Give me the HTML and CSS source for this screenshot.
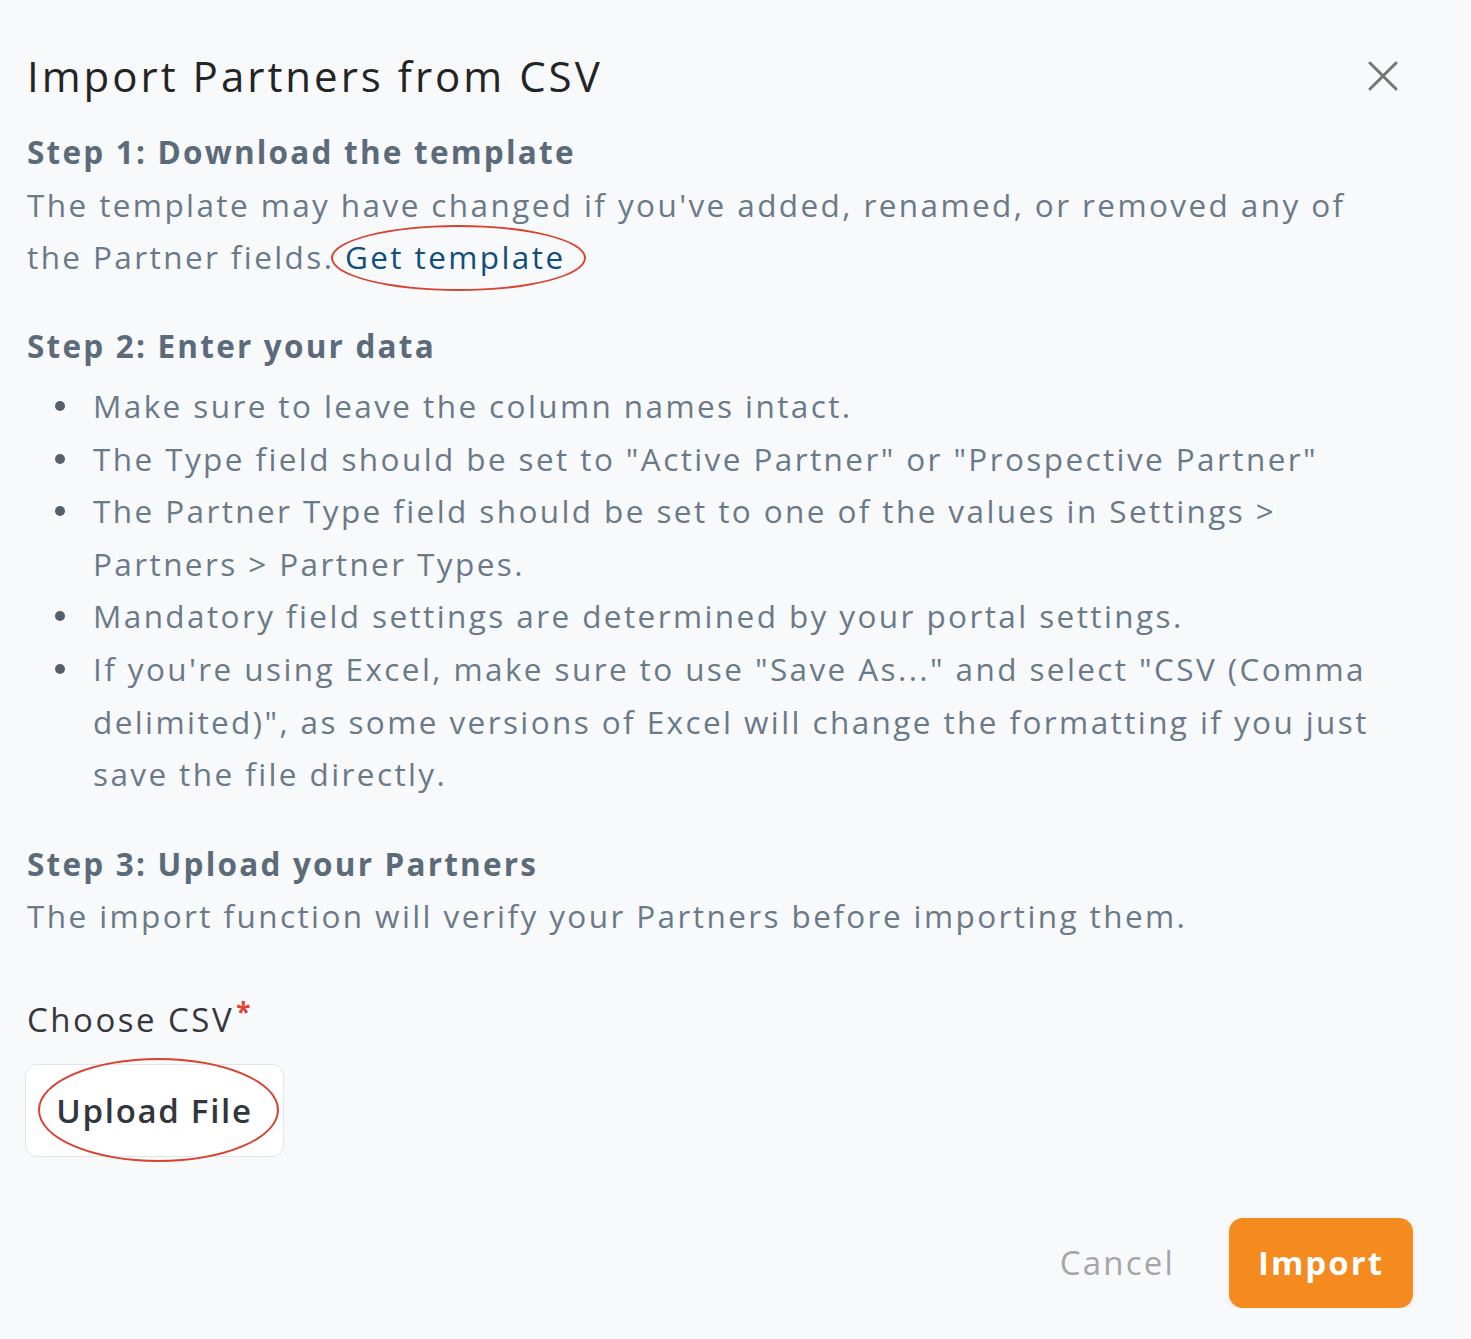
FILE: index.html
```html
<!DOCTYPE html>
<html lang="en">
<head>
<meta charset="utf-8">
<title>Import Partners from CSV</title>
<link rel="stylesheet" href="styles.css">
</head>
<body>
<div class="modal">
  <header class="modal-header">
    <h1 class="modal-title">Import Partners from CSV</h1>
    <button class="close-btn" aria-label="Close">
      <svg width="30" height="30" viewBox="0 0 30 30"><path d="M2 2 L28 28 M28 2 L2 28" stroke="#757575" stroke-width="3" stroke-linecap="round" fill="none"/></svg>
    </button>
  </header>

  <section class="step">
    <h2 class="step-title">Step 1: Download the template</h2>
    <p class="step-text">The template may have changed if you've added, renamed, or removed any of the Partner fields. <a class="link" href="#">Get template<span class="annot annot-link"></span></a></p>
  </section>

  <section class="step step-2">
    <h2 class="step-title">Step 2: Enter your data</h2>
    <ul class="bullets">
      <li>Make sure to leave the column names intact.</li>
      <li>The Type field should be set to "Active Partner" or "Prospective Partner"</li>
      <li>The Partner Type field should be set to one of the values in Settings &gt; Partners &gt; Partner Types.</li>
      <li>Mandatory field settings are determined by your portal settings.</li>
      <li>If you're using Excel, make sure to use "Save As..." and select "CSV (Comma delimited)", as some versions of Excel will change the formatting if you just save the file directly.</li>
    </ul>
  </section>

  <section class="step step-3">
    <h2 class="step-title">Step 3: Upload your Partners</h2>
    <p class="step-text">The import function will verify your Partners before importing them.</p>
  </section>

  <div class="field">
    <label class="field-label">Choose CSV<span class="req">*</span></label>
    <button class="upload-btn">Upload File<span class="annot annot-upload"></span></button>
  </div>

  <footer class="modal-footer">
    <button class="cancel-btn">Cancel</button>
    <button class="import-btn">Import</button>
  </footer>
</div>
</body>
</html>
```
FILE: styles.css
```css
html, body {
  margin: 0;
  padding: 0;
  background: #f8f9fb;
}
body {
  font-family: "Open Sans", "Noto Sans", sans-serif;
  -webkit-font-smoothing: antialiased;
}
.modal {
  width: 1386px;
  padding: 50px 0 0 27px;
  box-sizing: content-box;
}
.modal-header {
  display: flex;
  justify-content: space-between;
  align-items: center;
  height: 52px;
}
.modal-title {
  margin: 0;
  font-size: 42px;
  font-weight: 400;
  line-height: 52px;
  color: #222426;
  letter-spacing: 3px;
}
.close-btn {
  border: 0;
  background: none;
  padding: 0;
  margin-right: 15px;
  width: 30px;
  height: 30px;
  display: flex;
}
.step {
  margin-top: 24px;
  max-width: 1375px;
}
.step-2 { margin-top: 36px; }
.step-3 { margin-top: 37px; }
.step-title {
  margin: 0;
  font-size: 31.5px;
  line-height: 52.5px;
  font-weight: 700;
  color: #5c6b7a;
  letter-spacing: 2.2px;
}
.step-text {
  margin: 0;
  font-size: 31.5px;
  line-height: 52.5px;
  color: #6b7a89;
  letter-spacing: 2.4px;
}
.link {
  position: relative;
  display: inline-block;
  color: #114e7b;
  text-decoration: none;
}
.annot {
  position: absolute;
  border: 2.5px solid #d8422f;
  border-radius: 50%;
  box-sizing: border-box;
  pointer-events: none;
}
.annot-link {
  left: -14px;
  top: -6px;
  right: -20px;
  height: 66px;
}
.bullets {
  list-style: none;
  margin: 8px 0 0;
  padding: 0;
}
.bullets li {
  display: flex;
  font-size: 31.5px;
  line-height: 52.6px;
  color: #6b7a89;
  letter-spacing: 2.4px;
}
.bullets li::before {
  content: "";
  flex: none;
  width: 10px;
  height: 10px;
  border-radius: 50%;
  background: #56606b;
  margin: 21px 28px 0 28px;
}
.field {
  margin-top: 43px;
}
.field-label {
  display: block;
  font-size: 33px;
  line-height: 52px;
  font-weight: 500;
  color: #34383d;
  letter-spacing: 2.5px;
}
.req {
  color: #e0432f;
  font-size: 26px;
  font-weight: 700;
  vertical-align: 10px;
  margin-left: 2px;
}
.upload-btn {
  position: relative;
  display: block;
  margin-top: 18px;
  margin-left: -2px;
  width: 259px;
  height: 93px;
  background: #fff;
  border: 1.5px solid #e1e5ea;
  border-radius: 12px;
  font-family: inherit;
  font-size: 33px;
  font-weight: 600;
  color: #33373c;
  letter-spacing: 1.7px;
  padding: 0;
}
.annot-upload {
  left: 12px;
  top: -7px;
  width: 241px;
  height: 104px;
}
.modal-footer {
  display: flex;
  justify-content: flex-end;
  align-items: center;
  gap: 54px;
  margin-top: 61px;
}
.cancel-btn {
  border: 0;
  background: none;
  padding: 0;
  font-family: inherit;
  font-size: 33px;
  color: #a3a6aa;
  letter-spacing: 2.2px;
}
.import-btn {
  width: 184px;
  height: 90px;
  border: 0;
  border-radius: 14px;
  background: #f58a1f;
  color: #fff;
  font-family: inherit;
  font-size: 33px;
  font-weight: 700;
  letter-spacing: 2px;
  box-shadow: 0 2px 6px rgba(0,0,0,0.08);
}
```
